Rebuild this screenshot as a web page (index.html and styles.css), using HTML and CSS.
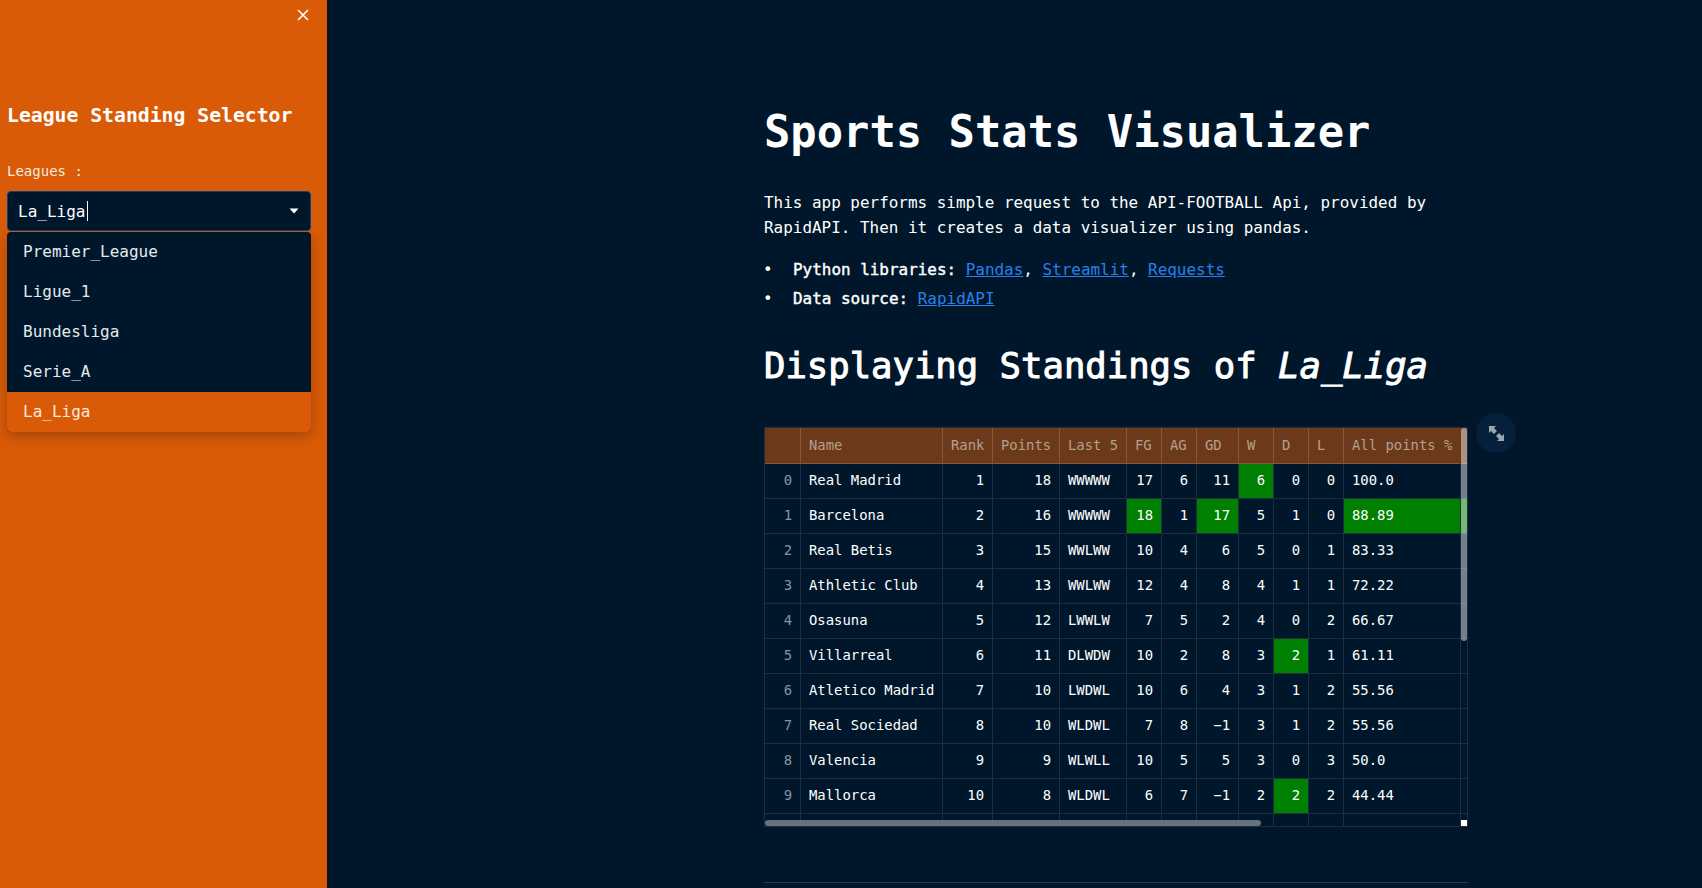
FILE: index.html
```html
<!DOCTYPE html>
<html lang="en">
<head>
    <meta charset="UTF-8">
    <title>Sports Stats Visualizer</title>
    <link rel="stylesheet" href="styles.css">
</head>
<body>
    <aside class="sidebar">
        <button class="fechar" aria-label="Close sidebar">
            <svg width="14" height="14" viewBox="0 0 14 14"><path d="M2 2 12 12M12 2 2 12" stroke="#fff" stroke-width="1.6" fill="none"/></svg>
        </button>
        <h2 class="sidebar-title">League Standing Selector</h2>
        <label class="sidebar-label">Leagues :</label>
        <div class="select-box">
            <span class="select-value">La_Liga</span><span class="caret"></span>
            <svg class="select-arrow" width="10" height="6" viewBox="0 0 10 6"><path d="M0.5 0.5H9.5L5 5.5Z" fill="#fff"/></svg>
        </div>
        <ul class="dropdown">
            <li>Premier_League</li>
            <li>Ligue_1</li>
            <li>Bundesliga</li>
            <li>Serie_A</li>
            <li class="selected">La_Liga</li>
        </ul>
    </aside>

    <main class="content">
        <h1>Sports Stats Visualizer</h1>
        <p class="intro">This app performs simple request to the API-FOOTBALL Api, provided by RapidAPI. Then it creates a data visualizer using pandas.</p>
        <ul class="info">
            <li><strong>Python libraries:</strong> <a href="#">Pandas</a>, <a href="#">Streamlit</a>, <a href="#">Requests</a></li>
            <li><strong>Data source:</strong> <a href="#">RapidAPI</a></li>
        </ul>
        <h2 class="standings">Displaying Standings of <em>La_Liga</em></h2>

        <div class="table-wrap">
            <div class="table-clip">
                <table>
                    <colgroup>
                        <col class="c-36"><col class="c-142"><col class="c-50"><col class="c-67"><col class="c-67">
                        <col class="c-35"><col class="c-35"><col class="c-42"><col class="c-35"><col class="c-35"><col class="c-35"><col class="c-rest">
                    </colgroup>
                    <thead>
                        <tr><th></th><th>Name</th><th>Rank</th><th>Points</th><th>Last 5</th><th>FG</th><th>AG</th><th>GD</th><th>W</th><th>D</th><th>L</th><th>All points %</th></tr>
                    </thead>
                    <tbody>
                        <tr><td class="idx">0</td><td>Real Madrid</td><td class="n">1</td><td class="n">18</td><td>WWWWW</td><td class="n">17</td><td class="n">6</td><td class="n">11</td><td class="n max">6</td><td class="n">0</td><td class="n">0</td><td>100.0</td></tr>
                        <tr><td class="idx">1</td><td>Barcelona</td><td class="n">2</td><td class="n">16</td><td>WWWWW</td><td class="n max">18</td><td class="n">1</td><td class="n max">17</td><td class="n">5</td><td class="n">1</td><td class="n">0</td><td class="max">88.89</td></tr>
                        <tr><td class="idx">2</td><td>Real Betis</td><td class="n">3</td><td class="n">15</td><td>WWLWW</td><td class="n">10</td><td class="n">4</td><td class="n">6</td><td class="n">5</td><td class="n">0</td><td class="n">1</td><td>83.33</td></tr>
                        <tr><td class="idx">3</td><td>Athletic Club</td><td class="n">4</td><td class="n">13</td><td>WWLWW</td><td class="n">12</td><td class="n">4</td><td class="n">8</td><td class="n">4</td><td class="n">1</td><td class="n">1</td><td>72.22</td></tr>
                        <tr><td class="idx">4</td><td>Osasuna</td><td class="n">5</td><td class="n">12</td><td>LWWLW</td><td class="n">7</td><td class="n">5</td><td class="n">2</td><td class="n">4</td><td class="n">0</td><td class="n">2</td><td>66.67</td></tr>
                        <tr><td class="idx">5</td><td>Villarreal</td><td class="n">6</td><td class="n">11</td><td>DLWDW</td><td class="n">10</td><td class="n">2</td><td class="n">8</td><td class="n">3</td><td class="n max">2</td><td class="n">1</td><td>61.11</td></tr>
                        <tr><td class="idx">6</td><td>Atletico Madrid</td><td class="n">7</td><td class="n">10</td><td>LWDWL</td><td class="n">10</td><td class="n">6</td><td class="n">4</td><td class="n">3</td><td class="n">1</td><td class="n">2</td><td>55.56</td></tr>
                        <tr><td class="idx">7</td><td>Real Sociedad</td><td class="n">8</td><td class="n">10</td><td>WLDWL</td><td class="n">7</td><td class="n">8</td><td class="n">−1</td><td class="n">3</td><td class="n">1</td><td class="n">2</td><td>55.56</td></tr>
                        <tr><td class="idx">8</td><td>Valencia</td><td class="n">9</td><td class="n">9</td><td>WLWLL</td><td class="n">10</td><td class="n">5</td><td class="n">5</td><td class="n">3</td><td class="n">0</td><td class="n">3</td><td>50.0</td></tr>
                        <tr><td class="idx">9</td><td>Mallorca</td><td class="n">10</td><td class="n">8</td><td>WLDWL</td><td class="n">6</td><td class="n">7</td><td class="n">−1</td><td class="n">2</td><td class="n max">2</td><td class="n">2</td><td>44.44</td></tr>
                        <tr><td></td><td></td><td></td><td></td><td></td><td></td><td></td><td></td><td></td><td></td><td></td><td></td></tr>
                    </tbody>
                </table>
            </div>
            <div class="scroll-track"></div>
            <div class="scroll-y"></div>
            <div class="scroll-x"></div>
            <div class="scroll-corner"></div>
            <button class="expandir" aria-label="Fullscreen">
                <svg width="15" height="15" viewBox="0 0 15 15"><path d="M0 0H7L5 2 8 5 5 8 2 5 0 7ZM15 15H8L10 13 7 10 10 7 13 10 15 8Z" fill="#98a5b2"/></svg>
            </button>
        </div>

        <hr>
    </main>
</body>
</html>
```

FILE: styles.css
```css
* {
    box-sizing: border-box;
}
html, body {
    height: 100%;
}
body {
    margin: 0;
    display: flex;
    height: 888px;
    overflow: hidden;
    background-color: #00172b;
    color: #fff;
    font-family: "DejaVu Sans Mono", "Liberation Mono", monospace;
}

/* barra lateral */
.sidebar {
    position: relative;
    flex: 0 0 327px;
    padding: 104px 16px 0 7px;
    background-color: #d95b07;
}
.fechar {
    position: absolute;
    top: 8px;
    right: 17px;
    padding: 0;
    border: none;
    background: none;
}
.sidebar-title {
    margin: 0 0 34px;
    font-size: 19.75px;
    line-height: 24px;
}
.sidebar-label {
    display: block;
    margin: 0 0 11px;
    font-size: 14px;
    line-height: 18px;
    color: #fbe9dc;
}
.select-box {
    display: flex;
    align-items: center;
    height: 40px;
    padding: 0 10px;
    border: 1px solid #0b4383;
    border-radius: 4px;
    background-color: #00172b;
    font-size: 16px;
}
.caret {
    width: 1px;
    height: 20px;
    margin-left: 2px;
    background-color: #fff;
}
.select-arrow {
    margin-left: auto;
    margin-right: 1px;
}
.dropdown {
    margin: 1px 0 0;
    padding: 0;
    list-style: none;
    overflow: hidden;
    border-radius: 4px;
    background-color: #00172b;
    box-shadow: 0 4px 14px rgba(0, 0, 0, 0.25);
    font-size: 16px;
    color: #e6e9ec;
}
.dropdown li {
    height: 40px;
    padding-left: 16px;
    line-height: 40px;
}
.dropdown .selected {
    background-color: #d95b07;
    color: #fbe9dc;
}

/* conteudo */
.content {
    flex: 0 0 1141px;
    padding: 107px 0 0 437px;
}
h1 {
    margin: 0 0 33px;
    font-size: 43.8px;
    line-height: 50px;
}
.intro {
    margin: 0 0 17px;
    font-size: 15.95px;
    line-height: 25px;
}
.info {
    margin: 0 0 33px;
    padding: 0;
    list-style: none;
    font-size: 15.95px;
    line-height: 25px;
}
.info li {
    margin-bottom: 4px;
}
.info li::before {
    content: "•";
    display: inline-block;
    width: 30px;
    margin-left: -1px;
}
.info strong {
    font-weight: 400;
    -webkit-text-stroke: 0.4px #fff;
}
.info a {
    color: #2a80ea;
}
.standings {
    margin: 0 0 39px;
    font-size: 35.6px;
    line-height: 44px;
    font-weight: 400;
    -webkit-text-stroke: 1px #fff;
}
em {
    font-weight: 400;
}

/* tabela */
.table-wrap {
    position: relative;
    width: 704px;
    height: 400px;
    border: 1px solid #1c2e40;
}
.table-clip {
    height: 398px;
    overflow: hidden;
}
table {
    width: 702px;
    border-collapse: separate;
    border-spacing: 0;
    table-layout: fixed;
    font-size: 13.9px;
}
.c-36 { width: 36px; }
.c-142 { width: 142px; }
.c-50 { width: 50px; }
.c-67 { width: 67px; }
.c-35 { width: 35px; }
.c-42 { width: 42px; }
.c-rest { width: 124px; }
th, td {
    height: 35px;
    padding: 0 8px 2px;
    border-right: 1px solid #1c2e40;
    border-bottom: 1px solid #1c2e40;
    text-align: left;
    white-space: nowrap;
    overflow: hidden;
}
th:last-child, td:last-child {
    border-right: none;
}
th {
    height: 36px;
    background-color: #6c3a1a;
    border-color: #87593a;
    font-weight: 400;
    color: #b4a08f;
}
.n {
    text-align: right;
}
.idx {
    text-align: right;
    color: #8a939c;
}
.max {
    background-color: #008000;
}
.scroll-track {
    position: absolute;
    top: 35px;
    bottom: 0;
    right: 6px;
    width: 1px;
    background-color: #1c2e40;
}
.scroll-y {
    position: absolute;
    top: 0;
    right: 0;
    width: 6px;
    height: 213px;
    border-radius: 3px;
    background-color: rgba(255, 255, 255, 0.45);
}
.scroll-x {
    position: absolute;
    left: 0;
    bottom: 0;
    width: 496px;
    height: 6px;
    border-radius: 3px;
    background-color: #66727c;
}
.scroll-corner {
    position: absolute;
    right: 0;
    bottom: 0;
    width: 6px;
    height: 6px;
    background-color: #fff;
}
.expandir {
    position: absolute;
    top: -15px;
    right: -49px;
    display: flex;
    align-items: center;
    justify-content: center;
    width: 40px;
    height: 40px;
    padding: 0;
    border: none;
    border-radius: 50%;
    background-color: #04203a;
}
hr {
    width: 704px;
    height: 1px;
    margin: 55px 0 0;
    border: none;
    background-color: #2b3b4a;
}
```
